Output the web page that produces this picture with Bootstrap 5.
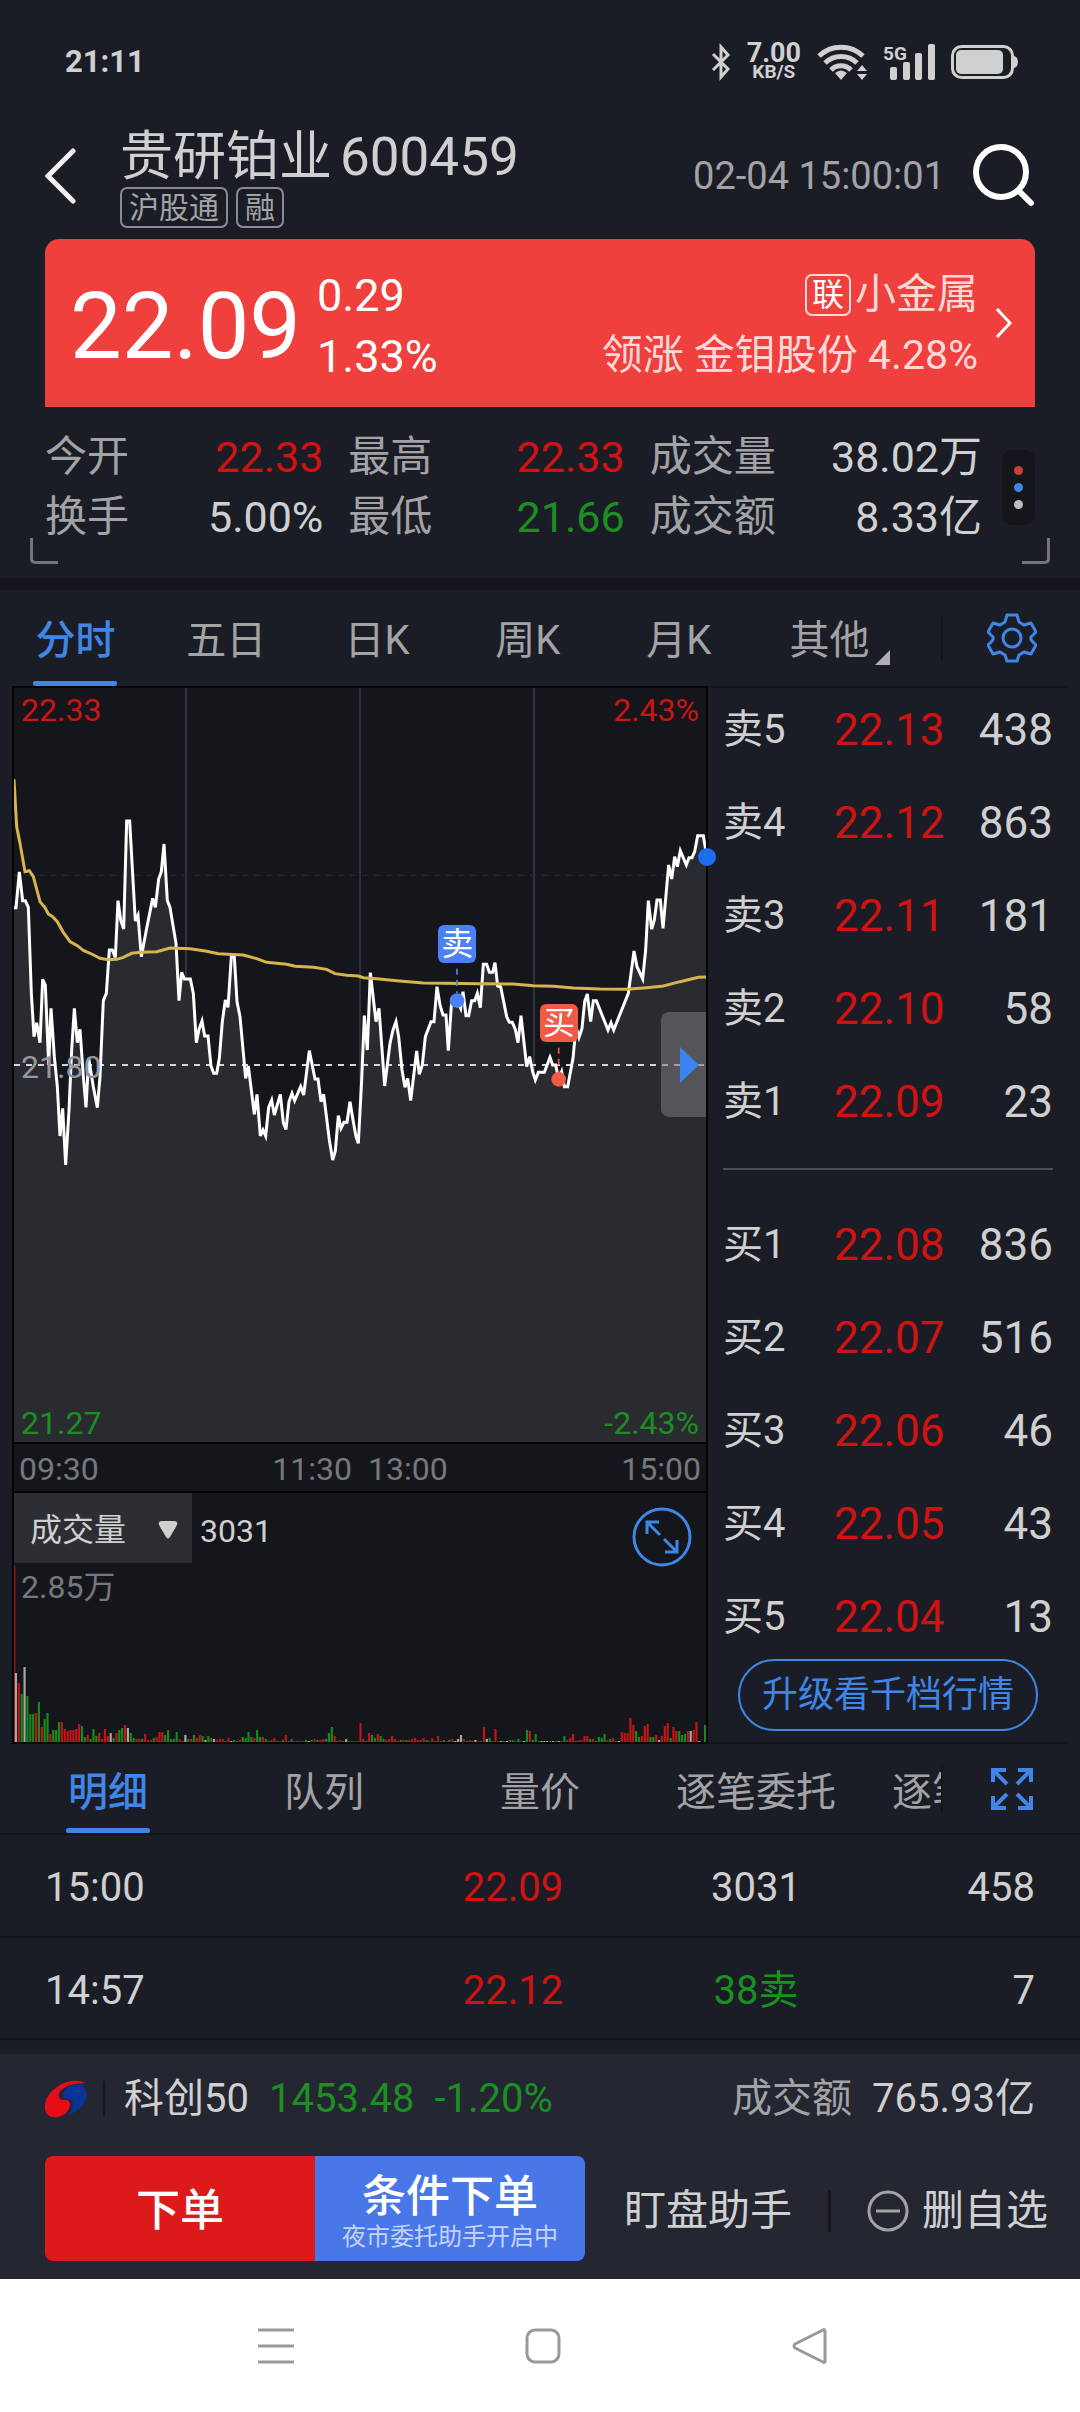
<!DOCTYPE html>
<html lang="zh-CN">
<head>
<meta charset="utf-8">
<meta name="viewport" content="width=device-width, initial-scale=1">
<title>贵研铂业 600459</title>
<link href="https://cdn.jsdelivr.net/npm/bootstrap@5.3.0/dist/css/bootstrap.min.css" rel="stylesheet">
<style>
:root{--ink:#d0d0d0;--dim:#a3a3a6;--faint:#77787d;--up:#d01212;--down:#1c8f22;--blue:#3f86e6;--bg:#1b1d26;--deep:#15161b;--line:#14151a}
body{background:var(--bg);color:var(--ink);font-family:Roboto,"Noto Sans CJK SC",sans-serif;font-size:40px;line-height:52px}
button{font-family:inherit}
svg{display:block;flex:none}
.plain{background:none;border:0;padding:0;color:inherit}
.c-up{color:var(--up)}.c-down{color:var(--down)}.c-dim{color:var(--dim)}.c-blue{color:var(--blue)}
.edge{padding-left:45px;padding-right:45px}
.status{height:124px;padding-left:65px;padding-right:62px;font-size:31px;font-weight:700;line-height:36px}
.speed{font-size:27px;line-height:20px}.speed span{font-size:19px;line-height:18px}
.stock{margin-left:43px;padding-top:3px}
.stock-name{font-size:53px;line-height:60px;font-weight:400}
.tag{font-size:30px;line-height:37px;border:2px solid #8b8c91;border-radius:7px;padding:0 7px;color:var(--dim)}
.clock{font-size:38px;color:var(--dim);margin-right:28px}
.titlebar{padding-bottom:11px}
.hero{background:#f0403e;color:#fff;border-radius:14px 14px 0 0;margin:0 45px;padding:0 21px 0 25px;height:168px;text-decoration:none}
.hero:hover{color:#fff}
.price{font-size:92px;line-height:92px;padding-top:7px}
.delta{font-size:45px;line-height:61px;padding-top:5px}
.sector{color:#ffd9d8;font-size:41px;line-height:61px;padding-top:4px}
.lian{font-size:32px;line-height:38px;border:2px solid #ffd9d8;border-radius:7px;padding:0 5px;color:#fff}
.facts{padding-top:20px;padding-bottom:31px;font-size:42px;line-height:60px}
.facts .pair{display:flex;justify-content:space-between}
.pair span:last-child{font-size:43px}
.facts-grid{display:grid;grid-template-columns:278fr 276fr 332fr;column-gap:25px;padding-right:20px}
.plain.dots{width:33px;height:75px;background:var(--deep);border-radius:10px}
.dots i{width:9px;height:9px;border-radius:50%;background:#bdbdbd}
.dots i:nth-child(1){background:#c8432f}.dots i:nth-child(2){background:var(--blue)}
.corner{position:absolute;bottom:14px;width:28px;height:26px;border:3px solid #74757a;border-top:0}
.corner.l{left:30px;border-right:0;border-bottom-left-radius:5px}
.corner.r{right:30px;border-left:0;border-bottom-right-radius:5px}
.stripe{height:12px;background:var(--deep)}
.tabs{height:96px}
.tabs .nav{flex:1 1 0;padding-right:36px;height:96px}
.tabs .nav-link,.subtabs .nav-link{padding:6px 0 0;color:var(--dim);display:flex;align-items:center;justify-content:center;height:100%;position:relative;flex:1 1 0}
.tabs .nav-link.active,.subtabs .nav-link.active{color:var(--blue);font-weight:500}
.active::after{content:"";position:absolute;bottom:0;left:50%;margin-left:-42px;width:84px;height:5px;border-radius:2px;background:var(--blue)}
.tool{width:139px;flex:none;border-left:2px solid var(--line);height:46px}
.tri{position:absolute;right:15px;bottom:21px}
.charts{width:696px;flex:0 1 auto;margin-left:12px;background:var(--deep);border:2px solid #050507;font-size:32px;line-height:36px}
.plot{height:754px}
.plot>svg{width:100%;height:100%}
.lab{position:absolute}
.lab.tl{left:7px;top:4px}.lab.tr{right:7px;top:4px}.lab.ml{left:7px;top:361px;color:#97979b}.lab.bl{left:7px;bottom:1px}.lab.br{right:7px;bottom:1px}
.flag{position:absolute;width:38px;height:38px;border-radius:6px;color:#fff;font-size:32px;line-height:38px;text-align:center}
.flag.sell{left:61.3%;top:237px;background:#4c80f6}
.flag.buy{left:76%;top:316px;background:#f15a45}
.lead-dot{position:absolute;width:18px;height:18px;border-radius:50%;background:#1c6df2;right:-10px;top:160px}
.plain.handle{position:absolute;right:0;top:324px;width:45px;height:105px;border-radius:8px 0 0 8px;background:rgba(120,118,122,.55);padding-left:19px}
.axis{height:51px;padding:2px 5px 0;border-top:2px solid #050507;border-bottom:2px solid #050507;color:var(--faint)}
.faint{color:var(--faint)}
.volhead{height:72px}
.volsel{width:178px;height:70px;background:#2d2e34;color:var(--ink);border:0;border-radius:0;padding:4px 0 0 16px;appearance:none;font-size:32px}
.volsel+svg{position:absolute;right:14px;top:28px;pointer-events:none}
.zoomer{margin:14px 14px 0 0}
.volplot{height:177px}.volplot>svg{width:100%;height:100%}
.book{flex:1 1 0;margin-right:12px;padding:16px 15px 0 15px;border-top:2px solid var(--line);border-bottom:2px solid var(--line)}
.book ul{gap:41px}
.book .lv{width:111px}.book .px,.book .qty{font-size:44px}
.book hr{margin:40px 0 49px;border:0;height:2px;background:#4a4b54;opacity:1}
.pill{border:2px solid var(--blue);border-radius:36px;width:300px;max-width:100%;height:72px;font-size:36px;color:var(--blue);padding:0;margin-top:16px}
.subtabs{height:91px;border-bottom:2px solid var(--line)}
.subtabs .nav{flex:1 1 0;overflow:hidden;height:89px}
.subtabs .nav-link{flex:0 0 216px;white-space:nowrap;padding-top:9px}
.ticks{margin:0;color:inherit;table-layout:fixed;width:100%}
.ticks td{height:102px;padding:5px 0 0;border-bottom:2px solid var(--line);vertical-align:middle}
.ticks td:first-child{padding-left:45px}.ticks td:last-child{padding-right:45px}
.w-time{width:37.5%}.w-price{width:20%}.w-vol{width:25%}
.dock{background:#242632;margin-top:14px;padding-bottom:18px}
.index{height:102px;padding-bottom:12px}
.index .sep{width:2px;height:36px;background:#17181e;margin:0 19px 0 16px}
.index .val{margin-left:20px}
.acts{padding-left:45px;padding-right:32px}
.act{height:105px;border:0;color:#fff;width:270px;flex:0 1 auto;font-size:44px;font-weight:500;line-height:52px;padding:5px 0 0}
.act.a{background:#dc1a1a;border-radius:8px 0 0 8px}
.act.b{background:#4a77e8;border-radius:0 8px 8px 0}
.act small{display:block;font-size:24px;line-height:28px;font-weight:400;color:#c3d3fb}
.more{font-size:42px;margin-left:39px;padding-top:4px}
.more button{gap:13px}
.more .sep{width:3px;height:42px;background:#17181e}
.sysnav{background:#fff;height:133px;color:#999;padding-left:258px;padding-right:252px}
</style>
<script src="https://cdn.jsdelivr.net/npm/bootstrap@5.3.0/dist/js/bootstrap.bundle.min.js"></script>
</head>
<body>
<header>
  <div class="status d-flex align-items-center justify-content-between">
    <span>21:11</span>
    <div class="d-flex align-items-center">
      <svg width="20" height="38" viewBox="0 0 20 38" fill="none" stroke="#d0d0d0" stroke-width="3"><path d="M2 11 17 26 10 34V4l7 8L2 27"/></svg>
      <div class="speed d-flex flex-column align-items-center ms-3">7.00<span>KB/S</span></div>
      <svg class="ms-3" width="50" height="38" viewBox="0 0 50 38" fill="none" stroke="#d0d0d0" stroke-width="5"><path d="M2 13a32 32 0 0 1 44 0M8 20a23 23 0 0 1 32 0M14 27a14 14 0 0 1 20 0"/><path d="M24 37l-6-7q6-5 12 0z" fill="#d0d0d0" stroke="none"/><path d="M45 22l5 6h-10zM45 37l5-6h-10z" fill="#d0d0d0" stroke="none"/></svg>
      <svg class="ms-3" width="52" height="38" viewBox="0 0 52 38" fill="#d0d0d0"><text x="0" y="17" font-size="19" font-weight="700">5G</text><rect x="7" y="24" width="7" height="13" rx="2"/><rect x="20" y="19" width="7" height="18" rx="2"/><rect x="32" y="10" width="7" height="27" rx="2"/><rect x="45" y="1" width="7" height="36" rx="2"/></svg>
      <svg class="ms-3" width="67" height="34" viewBox="0 0 67 34"><rect x="1.500" y="1.500" width="60" height="31" rx="9" fill="none" stroke="#d0d0d0" stroke-width="3"/><rect x="5" y="5" width="47" height="24" rx="5" fill="#d0d0d0"/><path d="M63 11q4 1 4 6t-4 6z" fill="#d0d0d0"/></svg>
    </div>
  </div>
  <div class="titlebar edge d-flex align-items-center">
    <button class="plain" aria-label="返回"><svg width="32" height="56" viewBox="0 0 32 56" fill="none" stroke="#f2f2f2" stroke-width="5" stroke-linecap="round"><path d="M28 3 3 28l25 25"/></svg></button>
    <div class="stock me-auto">
      <h1 class="stock-name m-0 d-flex gap-2">贵研铂业<span>600459</span></h1>
      <div class="d-flex gap-2"><span class="tag">沪股通</span><span class="tag">融</span></div>
    </div>
    <time class="clock">02-04 15:00:01</time>
    <button class="plain" aria-label="搜索"><svg width="62" height="64" viewBox="0 0 62 64" fill="none" stroke="#fff" stroke-width="6" stroke-linecap="round"><circle cx="28" cy="28" r="25"/><path d="m46 47 12 12"/></svg></button>
  </div>
</header>
<main>
  <a class="hero d-flex align-items-center" href="#">
    <div class="price">22.09</div>
    <div class="delta ms-3 flex-grow-1"><div>0.29</div><div>1.33%</div></div>
    <div class="sector text-end"><div class="d-flex justify-content-end align-items-center gap-1"><span class="lian">联</span>小金属</div><div>领涨 金钼股份 4.28%</div></div>
    <svg class="ms-3" width="20" height="32" viewBox="0 0 20 32" fill="none" stroke="#fff" stroke-width="3"><path d="M3 2l13 14L3 30"/></svg>
  </a>
  <section class="facts edge d-flex align-items-center position-relative">
    <div class="facts-grid flex-grow-1">
      <div class="pair"><span class="c-dim">今开</span><span class="c-up">22.33</span></div>
      <div class="pair"><span class="c-dim">最高</span><span class="c-up">22.33</span></div>
      <div class="pair"><span class="c-dim">成交量</span><span>38.02万</span></div>
      <div class="pair"><span class="c-dim">换手</span><span>5.00%</span></div>
      <div class="pair"><span class="c-dim">最低</span><span class="c-down">21.66</span></div>
      <div class="pair"><span class="c-dim">成交额</span><span>8.33亿</span></div>
    </div>
    <button class="plain dots d-flex flex-column align-items-center justify-content-center gap-2" aria-label="更多"><i></i><i></i><i></i></button>
    <span class="corner l"></span><span class="corner r"></span>
  </section>
  <div class="stripe"></div>
  <div class="tabs d-flex align-items-center">
    <nav class="nav flex-nowrap">
      <a class="nav-link active" href="#">分时</a><a class="nav-link" href="#">五日</a><a class="nav-link" href="#">日K</a><a class="nav-link" href="#">周K</a><a class="nav-link" href="#">月K</a>
      <a class="nav-link" href="#">其他<svg class="tri" width="15" height="15"><path d="M15 0V15H0z" fill="#b0b0b2"/></svg></a>
    </nav>
    <div class="tool d-flex align-items-center justify-content-center"><button class="plain c-blue" aria-label="设置"><svg width="50" height="50" viewBox="0 0 50 50" fill="none" stroke="currentColor" stroke-width="3" stroke-linejoin="round"><path d="M20 2h10l2 7 5 3 7-2 5 9-5 5v3l5 5-5 9-7-2-5 3-2 6H20l-2-6-5-3-7 2-5-9 5-5v-3l-5-5 5-9 7 2 5-3z"/><circle cx="25" cy="25" r="9"/></svg></button></div>
  </div>
  <div class="d-flex">
    <section class="charts">
      <div class="plot position-relative">
        <svg viewBox="42 24 2076 2262" preserveAspectRatio="none" fill="none" stroke-linejoin="miter">
          <path d="M558 24V2286M1080 24V2286M1602 24V2286" stroke="#30313b" stroke-width="6"/>
          <path d="M42 586H2118" stroke="#26272c" stroke-width="4" stroke-dasharray="18 18"/>
          <path id="area" fill="#2a2b30"/>
          <path d="M42 1155H2118" stroke="#d6d6d8" stroke-width="6" stroke-dasharray="18 18"/>
          <path id="trace" stroke="#fff" stroke-width="9"/>
          <polyline stroke="#d9b44e" stroke-width="9" points="42,298 50,440 60,490 75,575 88,572 100,590 120,665 135,683 145,702 158,710 172,725 190,757 210,785 232,797 250,811 275,822 300,835 325,839 350,838 370,832 395,820 420,817 470,815 510,804 570,806 620,814 655,821 730,825 770,836 800,847 860,853 885,859 940,862 980,868 1005,881 1040,886 1075,888 1090,893 1130,896 1190,902 1270,909 1330,910 1440,911 1540,912 1600,917 1660,919 1720,924 1800,927 1880,928 1940,923 1990,918 2040,905 2095,892 2118,891"/>
          <path d="M1371 866V940" stroke="#4c80f6" stroke-width="5" stroke-dasharray="18 16"/><circle cx="1371" cy="962" r="22" fill="#4c80f6"/>
          <path d="M1676 1103V1180" stroke="#f15a45" stroke-width="5" stroke-dasharray="18 16"/><circle cx="1676" cy="1198" r="22" fill="#f15a45"/>
        </svg>
        <span class="lab tl c-up">22.33</span><span class="lab tr c-up">2.43%</span><span class="lab ml">21.80</span><span class="lab bl c-down">21.27</span><span class="lab br c-down">-2.43%</span>
        <span class="flag sell">卖</span><span class="flag buy">买</span><span class="lead-dot"></span>
        <button class="plain handle" aria-label="展开"><svg width="19" height="36"><path d="M0 0 19 18 0 36z" fill="#3b83f0"/></svg></button>
      </div>
      <div class="axis d-flex justify-content-between align-items-center"><span>09:30</span><span class="d-flex gap-3"><span>11:30</span><span>13:00</span></span><span>15:00</span></div>
      <div class="volhead d-flex align-items-start">
        <label class="position-relative"><select class="volsel" aria-label="指标"><option>成交量</option></select><svg width="20" height="18"><path d="M4 0h12q4 0 3 4l-7 12q-2 3-4 0L1 4Q0 0 4 0" fill="#d0d0d0"/></svg></label>
        <span class="ms-2 me-auto mt-3 pt-1">3031</span>
        <button class="plain zoomer c-blue" aria-label="放大"><svg width="60" height="60" viewBox="0 0 60 60" fill="none" stroke="currentColor" stroke-width="3"><circle cx="30" cy="30" r="28"/><path d="M15 27V15h12M15 15l13 13M45 33v12H33M45 45 32 32"/></svg></button>
      </div>
      <div class="volplot position-relative"><svg id="vol" viewBox="0 0 241 177" preserveAspectRatio="none"></svg><span class="lab tl faint">2.85万</span></div>
    </section>
    <section class="book">
      <ul class="list-unstyled m-0 d-flex flex-column" id="asks"></ul>
      <hr>
      <ul class="list-unstyled m-0 d-flex flex-column" id="bids"></ul>
      <div class="text-center"><button class="btn pill">升级看千档行情</button></div>
    </section>
  </div>
  <div class="subtabs d-flex align-items-center">
    <nav class="nav flex-nowrap">
      <a class="nav-link active" href="#">明细</a><a class="nav-link" href="#">队列</a><a class="nav-link" href="#">量价</a><a class="nav-link" href="#">逐笔委托</a><a class="nav-link" href="#">逐笔成交</a>
    </nav>
    <div class="tool d-flex align-items-center justify-content-center"><button class="plain c-blue" aria-label="全屏"><svg width="44" height="44" viewBox="0 0 44 44" fill="none" stroke="currentColor" stroke-width="4"><path d="M3 15V3h13M3 3l14 14M28 3h13v12M41 3 27 17M3 29v12h13M3 41l14-14M41 29v12H28M41 41 27 27"/></svg></button></div>
  </div>
  <table class="ticks">
    <colgroup><col class="w-time"><col class="w-price"><col class="w-vol"><col></colgroup>
    <tbody>
      <tr><td>15:00</td><td class="text-center c-up">22.09</td><td class="text-center">3031</td><td class="text-end">458</td></tr>
      <tr><td>14:57</td><td class="text-center c-up">22.12</td><td class="text-center c-down">38卖</td><td class="text-end">7</td></tr>
    </tbody>
  </table>
</main>
<footer>
  <div class="dock">
    <div class="index edge d-flex align-items-center">
      <svg width="42" height="38" viewBox="0 0 42 38"><path d="M41 3Q26-3 12 7-2 17 0 30q3 9 13 7 11-3 12-12 0-6-7-5-6-1-4-7Q20 3 41 3" fill="#e60c18"/><path d="M38 5q8 12-2 22-6 6-15 9 8-6 7-13-2-4-9-5-3-6 4-11 7-4 15-2" fill="#0a3494"/></svg>
      <span class="sep"></span><span>科创50</span><span class="c-down val">1453.48</span><span class="c-down val">-1.20%</span>
      <span class="c-dim ms-auto">成交额</span><span class="val">765.93亿</span>
    </div>
    <div class="acts d-flex align-items-center">
      <button class="act a">下单</button><button class="act b">条件下单<small>夜市委托助手开启中</small></button>
      <div class="more d-flex align-items-center justify-content-between flex-grow-1">
        <a class="text-reset text-decoration-none" href="#">盯盘助手</a><span class="sep"></span>
        <button class="plain d-flex align-items-center"><svg width="42" height="42" fill="none" stroke="#a3a3a6" stroke-width="3"><circle cx="21" cy="21" r="19"/><path d="M9 21h24"/></svg>删自选</button>
      </div>
    </div>
  </div>
  <div class="sysnav d-flex align-items-center justify-content-between">
    <button class="plain" aria-label="任务"><svg width="36" height="36" stroke="#999" stroke-width="3"><path d="M0 2h36M0 18h36M0 34h36"/></svg></button>
    <button class="plain" aria-label="主页"><svg width="36" height="36" fill="none" stroke="#999" stroke-width="3"><rect x="2" y="2" width="32" height="32" rx="8"/></svg></button>
    <button class="plain" aria-label="后退"><svg width="36" height="36" fill="none" stroke="#999" stroke-width="3" stroke-linejoin="round"><path d="M33 2v32q-1 1-2 0L3 20q-2-2 0-4L31 2q1-1 2 0"/></svg></button>
  </div>
</footer>
<script>
// Intraday price trace
const pts="42,683 48,683 58,576 68,662 76,662 85,682 94,940 102,1070 110,1028 120,1088 128,898 136,915 146,1155 153,985 163,1130 172,1220 180,1368 188,1285 197,1455 207,1290 215,1110 223,985 232,1088 240,1048 250,1190 258,1282 266,1135 280,1220 292,1283 300,1190 310,962 319,940 328,810 337,810 346,832 354,662 362,720 371,747 380,423 389,423 406,723 414,706 424,830 440,745 458,655 466,682 476,597 484,575 492,492 502,662 510,682 528,790 537,962 545,877 553,897 571,897 580,940 589,1088 597,1048 606,1023 614,1068 624,1068 633,1158 641,1180 650,1180 658,1135 667,1025 676,960 684,982 694,830 703,830 711,965 720,1010 737,1195 745,1158 763,1303 771,1243 781,1368 789,1350 797,1368 806,1282 815,1260 823,1305 841,1243 850,1328 858,1348 867,1265 876,1240 884,1262 902,1220 911,1245 928,1112 945,1197 954,1197 963,1265 971,1243 988,1380 998,1440 1006,1413 1015,1307 1023,1345 1032,1327 1041,1327 1050,1265 1060,1325 1068,1370 1075,1390 1085,1200 1093,1007 1102,1110 1111,878 1128,1025 1137,985 1154,1218 1170,1090 1179,1050 1188,1025 1196,1070 1206,1170 1215,1222 1223,1195 1232,1262 1250,1113 1258,1183 1267,1155 1276,1070 1293,1025 1302,1025 1311,920 1320,975 1329,1005 1338,1005 1345,1112 1355,962 1371,962 1382,985 1389,935 1398,1007 1406,1007 1415,962 1424,962 1432,940 1441,983 1450,853 1460,853 1468,877 1478,877 1485,848 1493,918 1502,920 1520,1010 1528,1027 1537,1027 1546,1048 1554,1088 1563,1007 1580,1160 1589,1130 1598,1175 1606,1200 1615,1177 1633,1177 1650,1132 1658,1155 1667,1155 1676,1198 1685,1175 1693,1220 1703,1220 1719,1135 1728,1040 1737,1072 1746,1045 1754,965 1762,942 1772,1025 1780,962 1789,962 1824,1050 1833,1028 1841,1050 1885,940 1902,813 1911,860 1928,897 1937,810 1945,662 1955,747 1963,720 1971,660 1981,660 1989,745 2006,555 2015,597 2024,530 2032,560 2041,512 2059,555 2067,533 2076,533 2084,515 2093,467 2110,467 2118,515";
document.getElementById("trace").setAttribute("d","M"+pts);
document.getElementById("area").setAttribute("d","M"+pts+" 2118,2286 42,2286z");
// Volume per minute: colour letter followed by bar height
const vol="w69 r59 g48 w75 g46 g28 g28 r29 g40 r15 g23 g29 r8 g12 g12 g20 r20 r13 r11 r12 r12 r13 r18 g16 g5 r7 g3 g13 g6 r9 r3 r13 r6 w9 g4 r9 g12 g14 r17 w14 g9 g4 r3 r3 g3 r8 r2 r2 g4 r5 r10 r10 g7 g12 g3 g3 g10 r3 g1 w7 g3 r3 g7 r4 r7 g6 w2 g6 g4 w3 r2 r3 r3 g1 r4 w1 g2 g1 r2 g5 g4 g10 g5 r4 g12 g5 r5 g3 g1 r2 r4 g1 r1 g2 r7 g1 g3 r1 g1 r1 r1 g2 w1 g2 r3 g2 r2 r3 g3 g9 g15 r6 g1 r2 g1 w3 g1 r1 r1 r1 r19 r3 g1 r9 g7 g4 r8 g6 g3 r2 r3 r6 r3 g1 g2 r2 g2 r2 r3 r4 r2 r2 r4 g2 g1 r4 g1 r6 g1 g2 r1 g2 r3 w1 w3 w7 r3 g1 r2 g1 w2 r1 g1 r15 w3 g4 g1 r13 r1 w1 g1 w1 g2 g2 g1 g3 g1 w1 g12 r11 g2 g8 g1 w1 w1 w1 g1 w1 g1 w1 g1 g6 r2 r4 r8 g1 r2 r2 r6 r6 g3 r3 g1 g5 g4 g8 r2 g3 r4 g1 w1 r10 r9 r9 r24 r17 g11 g5 r6 r16 r18 g5 g5 r7 w2 r6 r16 r19 g4 r15 r11 g11 g7 g8 r11 w11 r12 r20 w1 w0 g17".split(" ");
const tone={r:"#c41515",g:"#178a1c",w:"#a8a8aa"};
document.getElementById("vol").innerHTML='<rect width=".5" height="177" fill="#8d1518"/>'+vol.map((v,i)=>{const h=+v.slice(1);return `<rect x="${(i*241/vol.length+.3).toFixed(2)}" y="${177-h}" width=".75" height="${h}" fill="${tone[v[0]]}"/>`}).join("");
// Order book
const rows=(id,list)=>document.getElementById(id).innerHTML=list.map(([a,b,c])=>`<li class="d-flex justify-content-between"><span class="lv">${a}</span><span class="px c-up p-0">${b}</span><span class="qty text-end flex-fill">${c}</span></li>`).join("");
rows("asks",[["卖5","22.13",438],["卖4","22.12",863],["卖3","22.11",181],["卖2","22.10",58],["卖1","22.09",23]]);
rows("bids",[["买1","22.08",836],["买2","22.07",516],["买3","22.06",46],["买4","22.05",43],["买5","22.04",13]]);
</script>
</body>
</html>
